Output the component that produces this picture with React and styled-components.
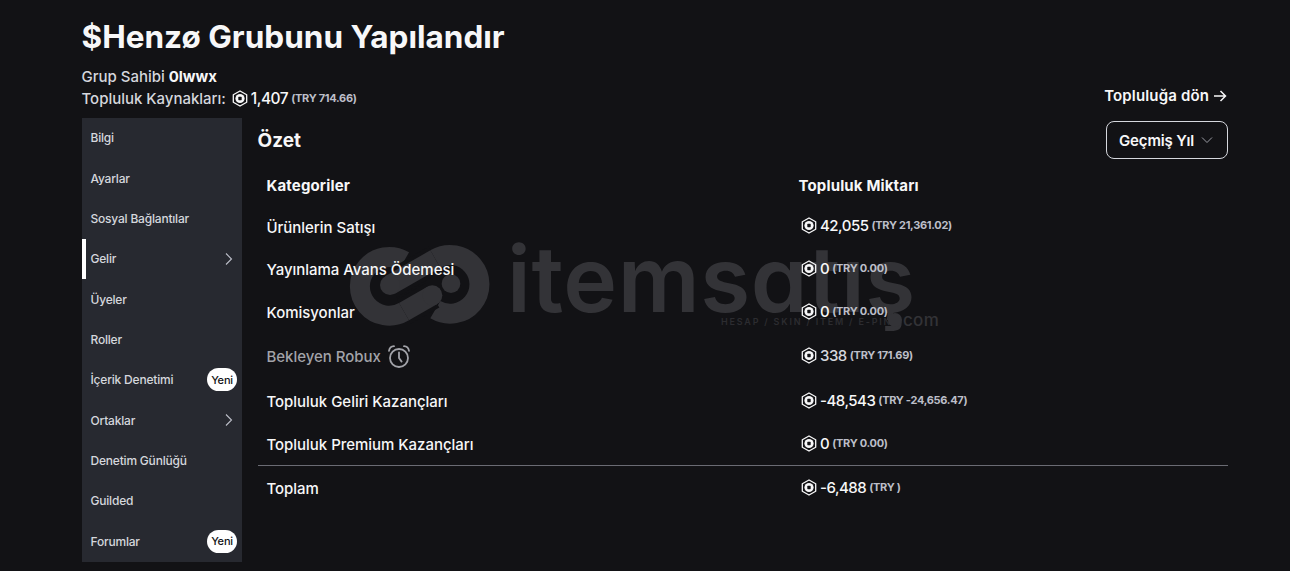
import React from 'react';
import styled, { createGlobalStyle } from 'styled-components';

const GlobalStyle = createGlobalStyle`
  html, body {
    margin: 0;
    padding: 0;
    height: 571px;
    overflow: hidden;
    background: #121215;
  }
  * {
    box-sizing: border-box;
  }
  body {
    font-family: Inter, "Noto Sans", "Liberation Sans", sans-serif;
    color: #f7f7f8;
  }
`;

const Page = styled.div`
  position: relative;
  width: 1290px;
  height: 571px;
  padding: 0 62px 0 82px;
  overflow: hidden;
`;

const Header = styled.header`
  height: 118px;
  padding-top: 17px;
  display: flex;
  justify-content: space-between;
  align-items: flex-start;
`;

const Title = styled.h1`
  margin: 0 0 8px -0.5px;
  font-size: 31.5px;
  line-height: 40px;
  font-weight: 700;
  color: #f7f7f8;
`;

const MetaLine = styled.div`
  display: flex;
  align-items: center;
  height: 22px;
  margin-left: -0.5px;
  font-size: 15px;
  font-weight: 500;
  letter-spacing: -0.02px;
  color: #d5d7dd;
`;

const Owner = styled.span`
  margin-left: 4px;
  font-weight: 700;
  color: #f7f7f8;
`;

const BackLink = styled.a`
  margin-top: 69px;
  display: flex;
  align-items: center;
  gap: 3px;
  font-size: 15px;
  font-weight: 600;
  letter-spacing: 0.15px;
  color: #f7f7f8;
`;

const Body = styled.div`
  display: flex;
  gap: 16px;
  align-items: flex-start;
`;

const Sidebar = styled.nav`
  width: 160px;
  height: 444px;
  background: #272930;
  display: flex;
  flex-direction: column;
`;

const NavItem = styled.div`
  position: relative;
  height: 40.4px;
  padding: 0 5px 1px ${({ $active }) => ($active ? '4.5px' : '8.5px')};
  display: flex;
  align-items: center;
  justify-content: space-between;
  font-size: 12px;
  font-weight: 500;
  letter-spacing: -0.2px;
  color: #d5d7dd;
  border-left: ${({ $active }) => ($active ? '4px solid #ffffff' : 'none')};
`;

const Badge = styled.span`
  width: 30px;
  height: 23px;
  border-radius: 12px;
  background: #ffffff;
  color: #121215;
  font-size: 11px;
  font-weight: 500;
  display: flex;
  align-items: center;
  justify-content: center;
`;

const Chevron = styled.span`
  display: flex;
  margin-right: 3px;
  color: #bcbec8;
`;

const Main = styled.main`
  flex: 1;
  position: relative;
`;

const SummaryBar = styled.div`
  height: 41px;
  margin-top: 3px;
  display: flex;
  justify-content: space-between;
  align-items: flex-start;
`;

const SummaryTitle = styled.h2`
  margin: 6px 0 0 -0.5px;
  font-size: 19px;
  line-height: 28px;
  font-weight: 700;
  color: #f7f7f8;
`;

const PeriodButton = styled.button`
  width: 122px;
  height: 38px;
  padding: 0 14px 0 12px;
  display: flex;
  align-items: center;
  justify-content: space-between;
  background: transparent;
  border: 1px solid #d5d7dd;
  border-radius: 8px;
  font-family: inherit;
  font-size: 15px;
  font-weight: 600;
  letter-spacing: -0.15px;
  color: #f7f7f8;
`;

const Row = styled.div`
  display: grid;
  grid-template-columns: 532px 1fr;
  height: ${({ $height }) => $height}px;
  margin-top: ${({ $ruled }) => ($ruled ? '3px' : '0')};
  padding-left: 8.5px;
  align-items: center;
  font-size: 15px;
  font-weight: ${({ $head }) => ($head ? 700 : 500)};
  letter-spacing: ${({ $head }) => ($head ? '0.15px' : '-0.03px')};
  color: ${({ $muted }) => ($muted ? '#a2a3a9' : '#f7f7f8')};
  ${({ $ruled }) => ($ruled ? 'border-top: 1px solid #6a6b73;' : '')}
`;

const Label = styled.span`
  display: flex;
  align-items: center;
  gap: 6px;
  padding-top: 4px;
`;

const Amount = styled.span`
  display: flex;
  align-items: center;
  font-size: 15px;
  font-weight: 500;
  letter-spacing: -0.5px;
  color: ${({ $muted }) => ($muted ? '#d5d7dd' : '#f7f7f8')};
`;

const AmountCell = styled(Amount)`
  padding-left: 2.5px;
  padding-top: ${({ $lift }) => ($lift ? '0' : '2px')};
`;

const Coin = styled.svg`
  width: 16px;
  height: 17px;
  margin-right: 3px;
  flex: none;
`;

const Fiat = styled.span`
  margin-left: 3px;
  font-size: 11px;
  font-weight: 700;
  letter-spacing: -0.3px;
  color: #bcbec8;
`;

const BalanceAmount = styled(Amount)`
  margin-left: 6px;
  font-size: 15.5px;
`;

const Watermark = styled.div`
  position: absolute;
  left: 345px;
  top: 238px;
  display: flex;
  align-items: flex-start;
  pointer-events: none;
  z-index: 0;
`;

const WatermarkLogo = styled.svg`
  width: 150px;
  height: 95px;
  flex: none;
`;

const WatermarkWord = styled.div`
  position: relative;
  margin-left: 12px;
  margin-top: -14px;
  font-size: 91px;
  line-height: 110px;
  font-weight: 600;
  letter-spacing: 0.6px;
  font-feature-settings: 'cv11';
  color: #333337;
`;

const WatermarkTag = styled.span`
  position: absolute;
  left: 214px;
  top: 92px;
  font-size: 9px;
  line-height: 11px;
  font-weight: 600;
  letter-spacing: 1.8px;
  white-space: nowrap;
  color: #2c2c30;
`;

const WatermarkCom = styled.span`
  position: absolute;
  left: 381px;
  top: 87px;
  padding-left: 15px;
  font-size: 17px;
  line-height: 18px;
  font-weight: 500;
  letter-spacing: 0.3px;
  color: #333337;

  &::before {
    content: '';
    position: absolute;
    left: 0;
    top: 2px;
    width: 14px;
    height: 14px;
    border-radius: 50%;
    background: #333337;
  }
`;

const Content = styled.div`
  position: relative;
  z-index: 1;
`;

const RobuxIcon = () => (
  <Coin viewBox="0 0 16 17" aria-hidden="true">
    <path
      d="M8 1 14.7 4.8v7.4L8 16 1.3 12.2V4.8z"
      fill="none"
      stroke="#f7f7f8"
      strokeWidth="1.3"
      strokeLinejoin="round"
    />
    <circle cx="8" cy="8.5" r="4.6" fill="#f7f7f8" />
    <rect x="6.3" y="6.8" width="3.4" height="3.4" rx="0.6" fill="#121215" />
  </Coin>
);

const ChevronRight = () => (
  <Chevron>
    <svg width="10" height="14" viewBox="0 0 10 14" fill="none">
      <path d="M2 1.5 7.5 7 2 12.5" stroke="currentColor" strokeWidth="1.1" />
    </svg>
  </Chevron>
);

const AlarmIcon = () => (
  <svg width="24" height="25" viewBox="0 0 24 25" fill="none" stroke="#a2a3a9" strokeWidth="1.8">
    <circle cx="12" cy="14" r="9" />
    <path d="M12 8.5V14l2.6 3.6" strokeLinecap="round" />
    <path d="M2 6.8C2.4 4.2 4.4 2.4 7 2.2M22 6.8C21.6 4.2 19.6 2.4 17 2.2" strokeLinecap="round" />
  </svg>
);

const LogoMark = () => (
  <WatermarkLogo viewBox="0 0 450 285">
    <g fill="none" strokeWidth="60" stroke="#333337">
      <path d="M177 69A88 88 0 1 0 177 221L262 172" />
      <path d="M271 215A88 88 0 1 0 271 63L135 141" />
      <path d="M271 63 135 141" stroke="#121215" strokeWidth="84" />
      <path d="M271 63 135 141" />
      <path d="M177 221 262 172" stroke="#121215" strokeWidth="84" />
      <path d="M177 221 262 172" />
    </g>
    <circle cx="135" cy="141" r="30" fill="#333337" />
    <circle cx="262" cy="172" r="30" fill="#333337" />
    <circle cx="318" cy="137" r="28" fill="#333337" />
  </WatermarkLogo>
);

const navItems = [
  { label: 'Bilgi' },
  { label: 'Ayarlar' },
  { label: 'Sosyal Bağlantılar' },
  { label: 'Gelir', active: true, chevron: true },
  { label: 'Üyeler' },
  { label: 'Roller' },
  { label: 'İçerik Denetimi', badge: true },
  { label: 'Ortaklar', chevron: true },
  { label: 'Denetim Günlüğü' },
  { label: 'Guilded' },
  { label: 'Forumlar', badge: true },
];

const rows = [
  { label: 'Ürünlerin Satışı', amount: '42,055', fiat: '(TRY 21,361.02)', height: 42, lift: true },
  { label: 'Yayınlama Avans Ödemesi', amount: '0', fiat: '(TRY 0.00)', height: 42 },
  { label: 'Komisyonlar', amount: '0', fiat: '(TRY 0.00)', height: 44 },
  { label: 'Bekleyen Robux', amount: '338', fiat: '(TRY 171.69)', height: 44, muted: true },
  { label: 'Topluluk Geliri Kazançları', amount: '-48,543', fiat: '(TRY -24,656.47)', height: 46 },
  { label: 'Topluluk Premium Kazançları', amount: '0', fiat: '(TRY 0.00)', height: 40 },
  { label: 'Toplam', amount: '-6,488', fiat: '(TRY )', height: 41, ruled: true },
];

export default function App() {
  return (
    <Page>
      <GlobalStyle />
      <Watermark aria-hidden="true">
        <LogoMark />
        <WatermarkWord>
          itemsatış
          <WatermarkTag>HESAP / SKIN / ITEM / E-PIN</WatermarkTag>
          <WatermarkCom>com</WatermarkCom>
        </WatermarkWord>
      </Watermark>
      <Content>
        <Header>
          <div>
            <Title>$Henzø Grubunu Yapılandır</Title>
            <MetaLine>
              Grup Sahibi<Owner>0lwwx</Owner>
            </MetaLine>
            <MetaLine>
              Topluluk Kaynakları:
              <BalanceAmount>
                <RobuxIcon />
                1,407
                <Fiat>(TRY 714.66)</Fiat>
              </BalanceAmount>
            </MetaLine>
          </div>
          <BackLink>
            Topluluğa dön
            <svg width="16" height="16" viewBox="0 0 16 16" fill="none" stroke="#f7f7f8" strokeWidth="1.5">
              <path d="M2 8h11.5M8.5 3l5 5-5 5" />
            </svg>
          </BackLink>
        </Header>
        <Body>
          <Sidebar>
            {navItems.map(item => (
              <NavItem key={item.label} $active={item.active}>
                {item.label}
                {item.chevron && <ChevronRight />}
                {item.badge && <Badge>Yeni</Badge>}
              </NavItem>
            ))}
          </Sidebar>
          <Main>
            <SummaryBar>
              <SummaryTitle>Özet</SummaryTitle>
              <PeriodButton>
                Geçmiş Yıl
                <svg width="12" height="8" viewBox="0 0 12 8" fill="none" stroke="#9a9ca4" strokeWidth="1">
                  <path d="M1 1.5 6 6.5l5-5" />
                </svg>
              </PeriodButton>
            </SummaryBar>
            <Row $head $height={42}>
              <Label>Kategoriler</Label>
              <Label>Topluluk Miktarı</Label>
            </Row>
            {rows.map(row => (
              <Row key={row.label} $height={row.height} $muted={row.muted} $ruled={row.ruled}>
                <Label>
                  {row.label}
                  {row.muted && <AlarmIcon />}
                </Label>
                <AmountCell $muted={row.muted} $lift={row.lift}>
                  <RobuxIcon />
                  {row.amount}
                  <Fiat>{row.fiat}</Fiat>
                </AmountCell>
              </Row>
            ))}
          </Main>
        </Body>
      </Content>
    </Page>
  );
}
